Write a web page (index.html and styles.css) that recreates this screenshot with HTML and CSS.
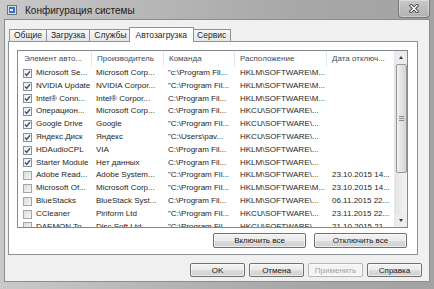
FILE: index.html
```html
<!DOCTYPE html>
<html lang="ru">
<head>
    <meta charset="UTF-8">
    <meta name="viewport" content="width=device-width, initial-scale=1.0">
    <title>Конфигурация системы</title>

    <link rel="stylesheet" href="styles.css">
</head>
<body>
    <div class="window">
        <div class="titlebar">
            <svg class="appIcon" width="10" height="10" viewBox="0 0 10 10">
                <rect x="0.5" y="0.5" width="9" height="9" fill="#d8dde6" stroke="#6b7380"/>
                <rect x="2" y="2" width="6" height="6" fill="#3d6fc4"/>
                <rect x="3" y="4" width="3" height="2" fill="#e8eef8"/>
            </svg>
            <span class="title">Конфигурация системы</span>
            <div class="closeBtn">
                <svg width="10" height="9" viewBox="0 0 10 9">
                    <path d="M2 1.5 L8 7.5 M8 1.5 L2 7.5" stroke="#4a4a4a" stroke-width="3.2" stroke-linecap="square"/>
                    <path d="M2 1.5 L8 7.5 M8 1.5 L2 7.5" stroke="#ffffff" stroke-width="1.4" stroke-linecap="square"/>
                </svg>
            </div>
        </div>

        <div class="client">
            <div class="tabs">
                <div class="tab">Общие</div>
                <div class="tab">Загрузка</div>
                <div class="tab">Службы</div>
                <div class="tab active">Автозагрузка</div>
                <div class="tab">Сервис</div>
            </div>

            <div class="panel">
                <div class="list">
                    <div class="listMain">
                        <div class="listHead">
                            <div class="cell">Элемент авто...</div>
                            <div class="cell">Производитель</div>
                            <div class="cell">Команда</div>
                            <div class="cell">Расположение</div>
                            <div class="cell">Дата отключ...</div>
                        </div>
                        <div id="listBody" class="listBody"></div>
                    </div>
                    <div class="scrollbar">
                        <div class="sbBtn"><span class="arrowUp"></span></div>
                        <div class="sbTrack">
                            <div class="sbThumb"><span class="grip"></span></div>
                        </div>
                        <div class="sbBtn"><span class="arrowDown"></span></div>
                    </div>
                </div>

                <div class="listActions">
                    <button class="winBtn wideBtn">Включить все</button>
                    <button class="winBtn wideBtn">Отключить все</button>
                </div>
            </div>

            <div class="dialogActions">
                <button class="winBtn">OK</button>
                <button class="winBtn">Отмена</button>
                <button class="winBtn" disabled>Применить</button>
                <button class="winBtn">Справка</button>
            </div>
        </div>
    </div>

    <script>
        const items = [
            [true, "Microsoft Se...", "Microsoft Corp...", "\"c:\\Program Fil...", "HKLM\\SOFTWARE\\M...", ""],
            [true, "NVIDIA Update", "NVIDIA Corpor...", "\"C:\\Program Fil...", "HKLM\\SOFTWARE\\M...", ""],
            [true, "Intel® Conn...", "Intel® Corpor...", "C:\\Program Fil...", "HKLM\\SOFTWARE\\M...", ""],
            [true, "Операцион...", "Microsoft Corp...", "C:\\Program Fil...", "HKCU\\SOFTWARE\\...", ""],
            [true, "Google Drive", "Google", "\"C:\\Program Fil...", "HKCU\\SOFTWARE\\...", ""],
            [true, "Яндекс.Диск", "Яндекс", "\"C:\\Users\\pav...", "HKCU\\SOFTWARE\\...", ""],
            [true, "HDAudioCPL", "VIA", "C:\\Program Fil...", "HKLM\\SOFTWARE\\...", ""],
            [true, "Starter Module", "Нет данных", "C:\\Program Fil...", "HKLM\\SOFTWARE\\...", ""],
            [false, "Adobe Read...", "Adobe System...", "\"C:\\Program Fil...", "HKLM\\SOFTWARE\\...", "23.10.2015 14..."],
            [false, "Microsoft Of...", "Microsoft Corp...", "\"C:\\Program Fil...", "HKLM\\SOFTWARE\\M...", "23.10.2015 14..."],
            [false, "BlueStacks", "BlueStack Syst...", "C:\\Program Fil...", "HKLM\\SOFTWARE\\...", "06.11.2015 22..."],
            [false, "CCleaner", "Piriform Ltd", "\"C:\\Program Fil...", "HKCU\\SOFTWARE\\...", "23.11.2015 22..."],
            [false, "DAEMON To...", "Disc Soft Ltd", "\"C:\\Program Fil...", "HKCU\\SOFTWARE\\...", "21.10.2015 21..."]
        ];

        const checkSvg = '<svg width="9" height="9" viewBox="0 0 9 9"><path d="M2 4.6 L3.7 6.4 L7 2.2" fill="none" stroke="#3a5186" stroke-width="1.4"/></svg>';

        function render() {
            const body = document.getElementById("listBody");
            body.innerHTML = "";

            items.forEach((item) => {
                const row = document.createElement("div");
                row.className = "row";
                row.innerHTML = `
                    <div class="cell first">
                        <span class="check ${item[0] ? "on" : ""}">${item[0] ? checkSvg : ""}</span>
                        <span>${item[1]}</span>
                    </div>
                    <div class="cell">${item[2]}</div>
                    <div class="cell">${item[3]}</div>
                    <div class="cell">${item[4]}</div>
                    <div class="cell">${item[5]}</div>
                `;
                body.appendChild(row);
            });
        }

        render();
    </script>
</body>
</html>
```

FILE: styles.css
```css
* {
    box-sizing: border-box;
}

body {
    margin: 0;
    font-family: "Liberation Sans", Arial, sans-serif;
    font-size: 8px;
    color: #262626;
    background-color: #a9a9a9;
}

.window {
    width: 434px;
    height: 289px;
    display: flex;
    flex-direction: column;
    padding: 0 4px 7px 4px;
    background: linear-gradient(90deg, #c9c9c9 0%, #b6b6b6 35%, #a7a7a7 70%, #a3a3a3 100%);
}

.titlebar {
    height: 19px;
    display: flex;
    align-items: center;
    padding: 1px 0 0 3px;
}

.appIcon {
    display: block;
}

.title {
    margin-left: 8px;
    font-size: 10px;
    color: #1a1a1a;
}

.closeBtn {
    margin-left: auto;
    align-self: flex-start;
    margin-top: -1px;
    width: 32px;
    height: 18px;
    display: flex;
    align-items: center;
    justify-content: center;
    border: 1px solid #767676;
    border-top: none;
    border-radius: 0 0 4px 4px;
    background: linear-gradient(#c9c9c9, #b1b1b1);
    box-shadow: inset 0 0 0 1px rgba(255,255,255,0.35);
}

.client {
    flex: 1;
    display: flex;
    flex-direction: column;
    padding: 7px 7px 4px 0;
    background-color: #f0f0f0;
    border: 1px solid #8d8d8d;
}

.tabs {
    display: flex;
    align-items: flex-end;
    padding-left: 4px;
    font-size: 8.5px;
}

.tab {
    height: 12px;
    padding: 0 4px;
    line-height: 11px;
    border: 1px solid #8e9299;
    border-bottom: none;
    border-right: none;
    background: linear-gradient(#f7f7f7, #e6e6e6);
    white-space: nowrap;
}

.tab:last-child {
    border-right: 1px solid #8e9299;
}

.tab.active {
    position: relative;
    z-index: 1;
    height: 15px;
    margin: 0 -2px -1px -2px;
    padding: 0 6px;
    line-height: 14px;
    border-right: 1px solid #8e9299;
    background: #fff;
}

.tab.active + .tab {
    border-left: none;
    padding-left: 5px;
}

.panel {
    height: 214px;
    margin-left: 3px;
    margin-right: 4px;
    padding: 8px 9px 6px 8px;
    background-color: #fff;
    border: 1px solid #8e9299;
}

.list {
    height: 178px;
    display: flex;
    border: 1px solid #828790;
    overflow: hidden;
}

.listMain {
    flex: 1;
    overflow: hidden;
}

.listHead,
.row {
    display: grid;
    grid-template-columns: 74px 72px 71px 92px 74px;
}

.listHead {
    height: 16px;
    line-height: 15px;
    color: #3f4d60;
}

.listHead .cell {
    padding-left: 5px;
    border-right: 1px solid #e4e7ec;
}

.listHead .cell:first-child {
    padding-left: 6px;
}

.row {
    height: 12.8px;
    line-height: 12.8px;
}

.cell {
    padding-left: 4px;
    white-space: nowrap;
    overflow: hidden;
}

.row .cell:nth-child(4),
.row .cell:nth-child(5) {
    padding-left: 5px;
}

.cell.first {
    display: flex;
    align-items: center;
    padding-left: 5px;
}

.check {
    width: 9px;
    height: 9px;
    margin-right: 4px;
    flex-shrink: 0;
    border: 1px solid #a3a6ab;
    background: linear-gradient(135deg, #dadbdd, #f7f7f7);
}

.check.on {
    border-color: #8c9098;
    background: linear-gradient(135deg, #e9ebee, #ffffff);
}

.check svg {
    display: block;
    margin: -1px;
}

.scrollbar {
    width: 13px;
    display: flex;
    flex-direction: column;
    background-color: #ececec;
    border-left: 1px solid #e6e6e6;
}

.sbBtn {
    height: 13px;
    display: flex;
    align-items: center;
    justify-content: center;
}

.arrowUp,
.arrowDown {
    width: 0;
    height: 0;
    border-left: 2.5px solid transparent;
    border-right: 2.5px solid transparent;
}

.arrowUp {
    border-bottom: 3px solid #3c3c3c;
}

.arrowDown {
    border-top: 3px solid #3c3c3c;
}

.sbTrack {
    flex: 1;
    background: linear-gradient(90deg, #e4e4e4, #f4f4f4);
}

.sbThumb {
    height: 109px;
    margin: 0 0 0 1px;
    display: flex;
    align-items: center;
    justify-content: center;
    border: 1px solid #989898;
    border-radius: 2px;
    background: linear-gradient(90deg, #f1f1f1, #e0e0e0 60%, #d4d4d4);
}

.grip {
    width: 5px;
    height: 5px;
    border-top: 1px solid #8a8a8a;
    border-bottom: 1px solid #8a8a8a;
    background: linear-gradient(#8a8a8a, #8a8a8a) center / 5px 1px no-repeat;
}

.listActions {
    display: flex;
    justify-content: flex-end;
    gap: 8px;
    margin-top: 5px;
    padding-right: 1px;
}

.winBtn {
    width: 55px;
    height: 14px;
    padding: 0;
    font-family: inherit;
    font-size: 8px;
    color: #1a1a1a;
    border: 1px solid #707070;
    border-radius: 2px;
    background: linear-gradient(#f3f3f3 0%, #ebebeb 50%, #dddddd 51%, #cfcfcf 100%);
    box-shadow: inset 0 0 0 1px rgba(255,255,255,0.6);
}

.wideBtn {
    width: 93px;
    height: 15px;
}

.winBtn:disabled {
    color: #a3a3a3;
    border-color: #b5b5b5;
    background: #f4f4f4;
}

.dialogActions {
    display: flex;
    justify-content: flex-end;
    gap: 4px;
    margin-top: 8px;
}
```
